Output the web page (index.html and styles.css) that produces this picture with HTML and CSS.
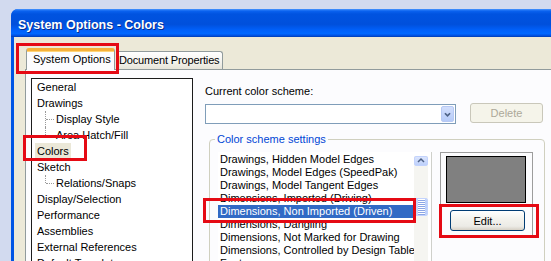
FILE: index.html
```html
<!DOCTYPE html>
<html lang="en">
<head>
    <meta charset="UTF-8">
    <title>System Options - Colors</title>
    <link rel="stylesheet" href="styles.css">
</head>
<body>
    <div class="window">
        <div class="titlebar">System Options - Colors</div>
        <div class="client">
            <div class="tabs">
                <div class="tab active">System Options</div>
                <div class="tab">Document Properties</div>
            </div>
            <div class="panel">
                <ul class="tree">
                    <li><span class="node">General</span></li>
                    <li><span class="node">Drawings</span></li>
                    <li class="child"><span class="node">Display Style</span></li>
                    <li class="child last"><span class="node">Area Hatch/Fill</span></li>
                    <li><span class="node selected">Colors</span></li>
                    <li><span class="node">Sketch</span></li>
                    <li class="child last"><span class="node">Relations/Snaps</span></li>
                    <li><span class="node">Display/Selection</span></li>
                    <li><span class="node">Performance</span></li>
                    <li><span class="node">Assemblies</span></li>
                    <li><span class="node">External References</span></li>
                    <li><span class="node">Default Templates</span></li>
                </ul>

                <div class="scheme">
                    <div class="field-label">Current color scheme:</div>
                    <div class="combo-row">
                        <div class="combo">
                            <span class="combo-btn">
                                <svg width="13" height="17" viewBox="0 0 13 17">
                                    <path d="M3.5 7 L6.5 10 L9.5 7" fill="none" stroke="#4d6185" stroke-width="2"/>
                                </svg>
                            </span>
                        </div>
                        <button class="btn delete" disabled>Delete</button>
                    </div>

                    <fieldset class="group">
                        <legend>Color scheme settings</legend>
                        <div class="group-body">
                            <div class="list">
                                <ul class="items">
                                    <li>Drawings, Hidden Model Edges</li>
                                    <li>Drawings, Model Edges (SpeedPak)</li>
                                    <li>Drawings, Model Tangent Edges</li>
                                    <li>Dimensions, Imported (Driving)</li>
                                    <li class="current">Dimensions, Non Imported (Driven)</li>
                                    <li>Dimensions, Dangling</li>
                                    <li>Dimensions, Not Marked for Drawing</li>
                                    <li>Dimensions, Controlled by Design Table</li>
                                    <li>Features</li>
                                </ul>
                                <div class="scrollbar">
                                    <span class="scroll-up">
                                        <svg width="12" height="8" viewBox="0 0 12 8">
                                            <path d="M3 5 L6 2 L9 5" fill="none" stroke="#4d6185" stroke-width="1.5"/>
                                        </svg>
                                    </span>
                                    <span class="scroll-thumb"></span>
                                </div>
                            </div>
                            <div class="preview">
                                <div class="swatch"></div>
                                <button class="btn edit">Edit...</button>
                            </div>
                        </div>
                    </fieldset>
                </div>
            </div>
        </div>
    </div>

    <!-- red callouts drawn over the screenshot -->
    <div class="mark mark-tab"></div>
    <div class="mark mark-colors"></div>
    <div class="mark mark-item"></div>
    <div class="mark mark-edit"></div>
</body>
</html>
```

FILE: styles.css
```css
body {
    margin: 0;
    padding: 9px 0 0 11px;
    width: 551px;
    height: 261px;
    box-sizing: border-box;
    overflow: hidden;
    position: relative;
    background: #d2daef;
    font-family: "Liberation Sans", Arial, sans-serif;
    font-size: 11px;
    color: #000;
}
.window {
    width: 560px;
    height: 270px;
    background: #0055e5;
    border-radius: 7px 0 0 0;
    display: flex;
    flex-direction: column;
}
.titlebar {
    height: 28px;
    flex: none;
    box-sizing: border-box;
    padding: 3px 0 0 7px;
    display: flex;
    align-items: center;
    border-radius: 7px 0 0 0;
    background: linear-gradient(to bottom, #4a96ff 0, #0a62f0 2px, #0053e0 5px, #0050dc 55%, #0060fa 75%, #0068ff 88%, #0050e0 95%, #003cb0 100%);
    color: #fff;
    font-weight: bold;
    font-size: 12.5px;
    text-shadow: 1px 1px 0 #0a2a8a;
}
.client {
    flex: 1;
    margin-left: 3px;
    background: #ece9d8;
    display: flex;
    flex-direction: column;
}
.tabs {
    height: 32px;
    flex: none;
    padding-left: 12px;
    display: flex;
    align-items: flex-end;
}
.tab {
    box-sizing: border-box;
    height: 18px;
    line-height: 17px;
    padding: 0 2px;
    min-width: 107px;
    border: 1px solid #919b9c;
    border-bottom: none;
    border-radius: 3px 3px 0 0;
    background: linear-gradient(to bottom, #fff, #f3f2ec 60%, #e6e4d8);
    white-space: nowrap;
    letter-spacing: -0.15px;
}
.tab.active {
    height: 22px;
    width: 89px;
    min-width: 0;
    line-height: 16px;
    padding: 0 6px;
    margin-bottom: -1px;
    margin-right: 1px;
    position: relative;
    letter-spacing: 0;
    border-top: 3px solid #f6b13a;
    box-shadow: inset 0 1px 0 #ffd478;
    background: #fcfcfe;
}
.panel {
    flex: 1;
    margin-left: 11px;
    border-top: 1px solid #919b9c;
    border-left: 1px solid #919b9c;
    background: #fcfcfe;
    padding: 8px 0 0 5px;
    display: flex;
    gap: 12px;
}
.tree {
    list-style: none;
    margin: 0;
    width: 162px;
    height: 200px;
    flex: none;
    box-sizing: border-box;
    border: 1px solid #1c1c1c;
    background: #fff;
    padding: 0 0 0 3px;
}
.tree li {
    height: 16px;
    line-height: 16px;
    position: relative;
    white-space: nowrap;
}
.tree .node {
    display: inline-block;
    padding: 0 2px;
}
.tree .node.selected {
    background: #ebe8d8;
}
.tree .child {
    padding-left: 19px;
}
.tree .child::before {
    content: '';
    position: absolute;
    left: 10px;
    top: 0;
    bottom: 0;
    border-left: 1px dotted #9a9a9a;
}
.tree .child.last::before {
    bottom: 8px;
}
.tree .child::after {
    content: '';
    position: absolute;
    left: 11px;
    top: 8px;
    width: 8px;
    border-top: 1px dotted #9a9a9a;
}
.scheme {
    flex: 1;
    padding-top: 7px;
}
.field-label {
    line-height: 13px;
}
.combo-row {
    margin-top: 6px;
    display: flex;
    align-items: flex-start;
    height: 20px;
}
.combo {
    width: 251px;
    height: 20px;
    box-sizing: border-box;
    border: 1px solid #7f9db9;
    background: #fff;
    display: flex;
    justify-content: flex-end;
    padding: 1px;
}
.combo-btn {
    width: 13px;
    height: 16px;
    border-radius: 2px;
    background: linear-gradient(to bottom, #d2defc, #b6cbf8);
    border: 1px solid #b7c9f4;
    box-sizing: border-box;
    display: flex;
    align-items: center;
    justify-content: center;
}
.combo-btn svg {
    display: block;
}
.btn {
    font-family: inherit;
    font-size: 11px;
    box-sizing: border-box;
    padding: 0;
    border-radius: 3px;
    cursor: default;
}
.btn.delete {
    margin: -1px 0 0 14px;
    width: 73px;
    height: 20px;
    border: 1px solid #c9c7ba;
    background: #f5f4ea;
    color: #aca899;
}
.group {
    margin: 9px 0 0 4px;
    width: 336px;
    height: 140px;
    box-sizing: border-box;
    padding: 0 8px;
    border: 1px solid #d0d0bf;
    border-radius: 4px;
}
.group legend {
    color: #0046d5;
    line-height: 13px;
    padding: 0 2px;
    margin-left: -3px;
}
.group-body {
    margin-top: 6px;
    display: flex;
    gap: 8px;
}
.list {
    width: 213px;
    height: 120px;
    display: flex;
    border-right: 1px solid #cfd0cb;
    background: #fff;
}
.items {
    list-style: none;
    margin: 0;
    padding: 1px 0 0 0;
    width: 196px;
}
.items li {
    height: 13px;
    line-height: 13px;
    padding-left: 2px;
    white-space: nowrap;
}
.items li.current {
    background: #316ac5;
    color: #fff;
}
.scrollbar {
    width: 14px;
    margin-top: 4px;
    background: #f5f5f1;
    display: flex;
    flex-direction: column;
    align-items: center;
}
.scroll-up {
    width: 14px;
    height: 10px;
    box-sizing: border-box;
    border: 1px solid #c3d3fd;
    border-radius: 2px;
    background: linear-gradient(to bottom, #dbe5fd, #bdd0fb);
    display: flex;
    align-items: center;
    justify-content: center;
}
.scroll-thumb {
    margin-top: 32px;
    width: 14px;
    height: 18px;
    box-sizing: border-box;
    border: 1px solid #c3d3fd;
    border-radius: 2px;
    background:
        linear-gradient(to bottom, #8ca6e6 1px, #fff 1px, #fff 2px, transparent 2px) center 5px / 7px 2px repeat-y,
        linear-gradient(to right, #c9d8fc, #bcd0fa);
    background-size: 7px 2px, auto;
    background-repeat: repeat-y, no-repeat;
    background-origin: padding-box;
    background-clip: padding-box;
}
.preview {
    width: 93px;
    height: 86px;
    box-sizing: border-box;
    border: 1px solid #9d9d9d;
    padding: 3px 0 0 5px;
}
.swatch {
    width: 80px;
    height: 47px;
    box-sizing: border-box;
    border: 1px solid #000;
    background: #808080;
}
.btn.edit {
    margin: 7px 0 0 4px;
    width: 75px;
    height: 21px;
    border: 1px solid #003c74;
    background: linear-gradient(to bottom, #fff, #f4f3ee 40%, #ecebe6 80%, #d6d0c5);
    color: #000;
}
.mark {
    position: absolute;
    box-sizing: border-box;
    border: 3px solid #e50a14;
}
.mark-tab {
    left: 16px;
    top: 43px;
    width: 103px;
    height: 31px;
}
.mark-colors {
    left: 23px;
    top: 135px;
    width: 64px;
    height: 26px;
}
.mark-item {
    left: 203px;
    top: 198px;
    width: 213px;
    height: 25px;
}
.mark-edit {
    left: 439px;
    top: 204px;
    width: 100px;
    height: 34px;
}
```
